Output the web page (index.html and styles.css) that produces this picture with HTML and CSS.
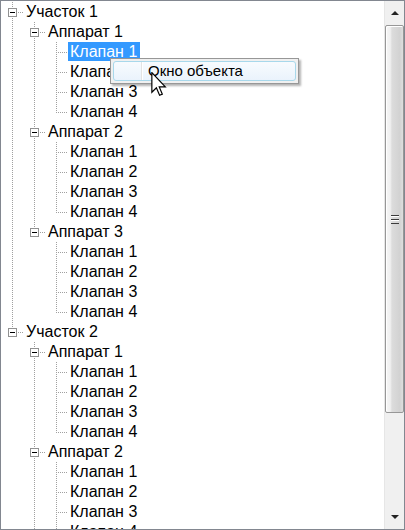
FILE: index.html
```html
<!DOCTYPE html>
<html>
<head>
<meta charset="utf-8">
<link rel="stylesheet" href="styles.css">
</head>
<body>
<div class="tree">
  <div class="rows">
    <div class="row"><span class="c bx dn"></span><span class="lbl">Участок 1</span></div>
    <div class="row"><span class="c v"></span><span class="c bx up dn"></span><span class="lbl">Аппарат 1</span></div>
    <div class="row"><span class="c v"></span><span class="c v"></span><span class="c tee"></span><span class="lbl sel">Клапан 1</span></div>
    <div class="row"><span class="c v"></span><span class="c v"></span><span class="c tee"></span><span class="lbl">Клапан 2</span></div>
    <div class="row"><span class="c v"></span><span class="c v"></span><span class="c tee"></span><span class="lbl">Клапан 3</span></div>
    <div class="row"><span class="c v"></span><span class="c v"></span><span class="c elb"></span><span class="lbl">Клапан 4</span></div>
    <div class="row"><span class="c v"></span><span class="c bx up dn"></span><span class="lbl">Аппарат 2</span></div>
    <div class="row"><span class="c v"></span><span class="c v"></span><span class="c tee"></span><span class="lbl">Клапан 1</span></div>
    <div class="row"><span class="c v"></span><span class="c v"></span><span class="c tee"></span><span class="lbl">Клапан 2</span></div>
    <div class="row"><span class="c v"></span><span class="c v"></span><span class="c tee"></span><span class="lbl">Клапан 3</span></div>
    <div class="row"><span class="c v"></span><span class="c v"></span><span class="c elb"></span><span class="lbl">Клапан 4</span></div>
    <div class="row"><span class="c v"></span><span class="c bx up"></span><span class="lbl">Аппарат 3</span></div>
    <div class="row"><span class="c v"></span><span class="c"></span><span class="c tee"></span><span class="lbl">Клапан 1</span></div>
    <div class="row"><span class="c v"></span><span class="c"></span><span class="c tee"></span><span class="lbl">Клапан 2</span></div>
    <div class="row"><span class="c v"></span><span class="c"></span><span class="c tee"></span><span class="lbl">Клапан 3</span></div>
    <div class="row"><span class="c v"></span><span class="c"></span><span class="c elb"></span><span class="lbl">Клапан 4</span></div>
    <div class="row"><span class="c bx up"></span><span class="lbl">Участок 2</span></div>
    <div class="row"><span class="c"></span><span class="c bx up dn"></span><span class="lbl">Аппарат 1</span></div>
    <div class="row"><span class="c"></span><span class="c v"></span><span class="c tee"></span><span class="lbl">Клапан 1</span></div>
    <div class="row"><span class="c"></span><span class="c v"></span><span class="c tee"></span><span class="lbl">Клапан 2</span></div>
    <div class="row"><span class="c"></span><span class="c v"></span><span class="c tee"></span><span class="lbl">Клапан 3</span></div>
    <div class="row"><span class="c"></span><span class="c v"></span><span class="c elb"></span><span class="lbl">Клапан 4</span></div>
    <div class="row"><span class="c"></span><span class="c bx up dn"></span><span class="lbl">Аппарат 2</span></div>
    <div class="row"><span class="c"></span><span class="c v"></span><span class="c tee"></span><span class="lbl">Клапан 1</span></div>
    <div class="row"><span class="c"></span><span class="c v"></span><span class="c tee"></span><span class="lbl">Клапан 2</span></div>
    <div class="row"><span class="c"></span><span class="c v"></span><span class="c tee"></span><span class="lbl">Клапан 3</span></div>
    <div class="row"><span class="c"></span><span class="c v"></span><span class="c elb"></span><span class="lbl">Клапан 4</span></div>
  </div>
  <div class="scrollbar">
    <div class="sb-btn"><span class="arr-up"></span></div>
    <div class="sb-track">
      <div class="thumb"><span class="grip"></span></div>
    </div>
    <div class="sb-btn"><span class="arr-dn"></span></div>
  </div>

  <div class="menu">
    <div class="menu-item"><span class="gutter"></span><span class="mtext">Окно объекта</span></div>
  </div>
  <svg class="cursor" width="16" height="25" viewBox="0 0 13 21">
    <path d="M0.5,0.5 L0.5,17 L4.3,13.3 L7,19.6 L9.3,18.6 L6.7,12.5 L11.8,12.5 Z" fill="#fff" stroke="#000" stroke-width="1" stroke-linejoin="miter"/>
  </svg>
</div>
</body>
</html>
```
FILE: styles.css
```css
html, body {
  margin: 0;
  padding: 0;
  background: #fff;
}

.tree {
  position: relative;
  width: 405px;
  height: 530px;
  box-sizing: border-box;
  border: 1px solid #828790;
  display: flex;
  overflow: hidden;
  font-family: "Liberation Sans", Arial, sans-serif;
  font-size: 16px;
  color: #000;
}

.rows {
  flex: 1;
  padding-top: 1px;
  overflow: hidden;
}

.row {
  display: flex;
  height: 20px;
  align-items: flex-start;
}

.c {
  position: relative;
  width: 22px;
  height: 20px;
  flex-shrink: 0;
}

.c::before,
.c::after {
  content: "";
  position: absolute;
}

/* vertical dotted line, full height */
.v::before,
.tee::before {
  left: 11px;
  top: 0;
  width: 1px;
  height: 20px;
  background: linear-gradient(#a0a0a0 50%, transparent 50%) 0 0 / 1px 2px repeat-y;
}

.elb::before {
  left: 11px;
  top: 0;
  width: 1px;
  height: 11px;
  background: linear-gradient(#a0a0a0 50%, transparent 50%) 0 0 / 1px 2px repeat-y;
}

.tee::after,
.elb::after {
  left: 12px;
  top: 10px;
  width: 10px;
  height: 1px;
  background: linear-gradient(to right, transparent 50%, #a0a0a0 50%) 0 0 / 2px 1px repeat-x;
}

/* expander box */
.bx::before {
  left: 7px;
  top: 6px;
  width: 7px;
  height: 7px;
  border: 1px solid #919191;
  background: #fff linear-gradient(#000, #000) 1px 3px / 5px 1px no-repeat;
  z-index: 1;
}

.bx::after {
  left: 16px;
  top: 10px;
  width: 6px;
  height: 1px;
  background: linear-gradient(to right, transparent 50%, #a0a0a0 50%) 0 0 / 2px 1px repeat-x;
}

.bx.up,
.bx.dn {
  background-repeat: no-repeat;
}

.bx.up {
  background-image: linear-gradient(#a0a0a0 50%, transparent 50%);
  background-size: 1px 2px;
  background-position: 11px 0;
  background-repeat: repeat-y;
  background-clip: content-box;
  box-sizing: border-box;
  padding-bottom: 14px;
}

.bx.dn {
  background-image: linear-gradient(#a0a0a0 50%, transparent 50%);
  background-size: 1px 2px;
  background-position: 11px 0;
  background-repeat: repeat-y;
  box-sizing: border-box;
}

.bx.up.dn {
  padding-bottom: 0;
}

.lbl {
  margin-left: 1px;
  padding: 0 3px 0 2px;
  height: 19px;
  line-height: 19px;
  white-space: nowrap;
}

.lbl.sel {
  background: #3399ff;
  color: #fff;
}

/* scrollbar */
.scrollbar {
  width: 20px;
  flex-shrink: 0;
  display: flex;
  flex-direction: column;
  background: #f0f0f0;
  border-left: 1px solid #e6e6e6;
  box-sizing: border-box;
}

.sb-btn {
  height: 24px;
  flex-shrink: 0;
  display: flex;
  align-items: center;
  justify-content: center;
}

.arr-up {
  width: 0;
  height: 0;
  border-left: 4px solid transparent;
  border-right: 4px solid transparent;
  border-bottom: 4px solid #222;
}

.arr-dn {
  width: 0;
  height: 0;
  border-left: 4px solid transparent;
  border-right: 4px solid transparent;
  border-top: 4px solid #222;
}

.sb-track {
  flex: 1;
  display: flex;
  flex-direction: column;
}

.thumb {
  height: 388px;
  margin: 0 0 0 0;
  border: 1px solid #979797;
  border-radius: 2px;
  background: linear-gradient(to right, #f6f6f6 0%, #f0f0f0 25%, #dcdcdc 35%, #d2d2d2 80%, #dedede 100%);
  box-shadow: inset 1px 1px 0 #fff;
  display: flex;
  align-items: center;
  justify-content: center;
  box-sizing: border-box;
}

.grip {
  width: 8px;
  height: 9px;
  background: linear-gradient(#3c3c3c 0 1px, #fff 1px 2px, transparent 2px 4px, #3c3c3c 4px 5px, #fff 5px 6px, transparent 6px 8px) 0 0 / 8px 9px no-repeat,
              linear-gradient(#3c3c3c, #3c3c3c) 0 8px / 8px 1px no-repeat;
}

/* context menu */
.menu {
  position: absolute;
  left: 109px;
  top: 57px;
  width: 189px;
  height: 26px;
  box-sizing: border-box;
  background: #f0f0f0;
  border: 1px solid #979797;
  box-shadow: 2px 2px 2px rgba(0, 0, 0, 0.3);
  padding: 2px;
  font-size: 15px;
}

.menu-item {
  height: 20px;
  box-sizing: border-box;
  border: 1px solid #a8d8eb;
  border-radius: 3px;
  background: linear-gradient(#f8fbfe, #eaf3fc);
  display: flex;
  align-items: center;
  position: relative;
}

.gutter {
  width: 27px;
  align-self: stretch;
  border-right: 1px solid #e2e3e3;
  box-shadow: 1px 0 0 #fff;
  flex-shrink: 0;
}

.mtext {
  margin-left: 6px;
  line-height: 18px;
}

.cursor {
  position: absolute;
  left: 150px;
  top: 71px;
  z-index: 5;
}
```
